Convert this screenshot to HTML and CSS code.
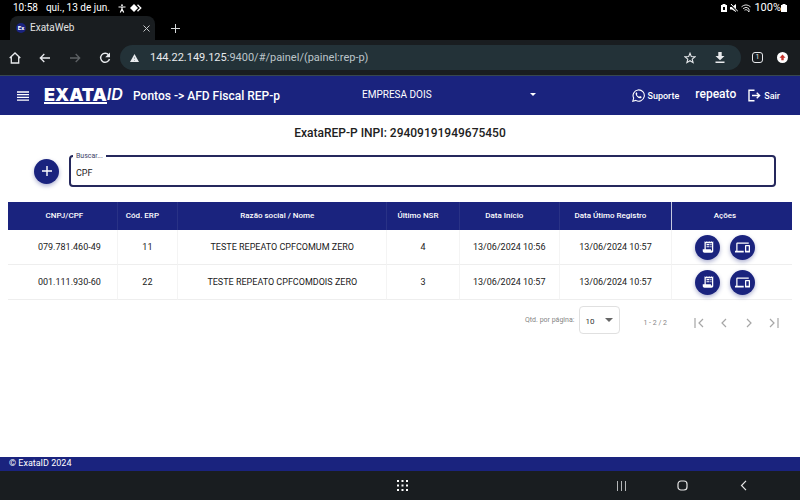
FILE: index.html
```html
<!DOCTYPE html>
<html lang="pt-BR">
<head>
<meta charset="utf-8">
<meta name="viewport" content="width=device-width, initial-scale=1">
<title>ExataWeb</title>
<link rel="stylesheet" href="styles.css">
</head>
<body>
<svg class="defs" aria-hidden="true">
  <symbol id="receipt" viewBox="0 0 24 24"><path fill="currentColor" fill-rule="evenodd" d="M21 2v17c0 1.700-1.300 3-3 3H6c-1.700 0-3-1.300-3-3v-3h3V2l1.500 1.500L9 2l1.500 1.500L12 2l1.500 1.500L15 2l1.500 1.500L18 2l1.500 1.500zM8.200 5.500V16H17v2h1.800V5.500z"/><path fill="currentColor" d="M9.500 7h5v2h-5zM16 7h2v2h-2zM9.500 10.500h5v2h-5zM16 10.500h2v2h-2z"/></symbol>
  <symbol id="devices" viewBox="0 0 24 24"><path fill="currentColor" d="M4 6h18V4H4c-1.100 0-2 .9-2 2v11H0v3h14v-3H4V6zm19 2h-6c-.55 0-1 .45-1 1v10c0 .55.45 1 1 1h6c.55 0 1-.45 1-1V9c0-.55-.45-1-1-1zm-1 9h-4v-7h4v7z"/></symbol>
</svg>

<div class="status">
  <div class="group">
    <span>10:58</span>
    <span>qui., 13 de jun.</span>
    <span class="status-icons">
      <svg width="8" height="9" viewBox="0 0 8 9" fill="none" stroke="#fff" stroke-width="1.200"><circle cx="4" cy="1.200" r=".9" fill="#fff" stroke="none"/><path d="M.5 3h7M4 3v2.500M4 5 2.300 8.600M4 5l1.700 3.600"/></svg>
      <svg width="12" height="8" viewBox="0 0 12 8"><path fill="#fff" d="m4 0 4 4-4 4-4-4z"/><path d="m7.500.7 3.300 3.300-3.300 3.300" fill="none" stroke="#fff" stroke-width="1.300"/></svg>
    </span>
  </div>
  <div class="group tight">
    <svg width="6" height="8" viewBox="0 0 6 8"><path fill="#fff" d="M1.500 0h3v1H6v7H0V1h1.500z"/><path d="M2 3h2v3H2z" fill="#000"/></svg>
    <svg width="8" height="8" viewBox="0 0 8 8"><path fill="#fff" d="M0 3h2l4-3v8L2 5.500H0z"/><path d="m0 0 8 8" stroke="#000" stroke-width="1.600"/><path d="m1 0 7 7.500" stroke="#fff"/></svg>
    <svg width="10" height="8" viewBox="0 0 10 8" fill="none" stroke="#ddd"><path d="M.5 2.800Q5-1 9.500 2.800M2 4.600Q5 2 8 4.600M3.500 6.200Q5 5 6.500 6.200"/><path d="M8 5v3M6.500 6.500 8 8"/></svg>
    <span class="battery">100%<svg width="6" height="8" viewBox="0 0 6 8"><path fill="#fff" d="M1.500 0h3v1H6v7H0V1h1.500z"/></svg></span>
  </div>
</div>

<div class="tabs">
  <div class="tab">
    <span class="favicon">Ex</span>
    <span class="tab-title">ExataWeb</span>
    <button class="plain" aria-label="Fechar guia"><svg width="7" height="7" viewBox="0 0 7 7" stroke="#c4c7c9"><path d="m.5.5 6 6m0-6-6 6"/></svg></button>
  </div>
  <button class="plain" aria-label="Nova guia"><svg width="9" height="9" viewBox="0 0 9 9" stroke="#d5d8da"><path d="M4.500 0v9M0 4.500h9"/></svg></button>
</div>

<div class="toolbar">
  <button class="plain nav" aria-label="Início"><svg width="12" height="12" viewBox="0 0 12 12" fill="none" stroke="#e8eaed" stroke-width="1.300"><path d="M.7 6 6 1l5.300 5M2.300 5v6h7.400V5"/></svg></button>
  <button class="plain nav" aria-label="Voltar"><svg width="12" height="10" viewBox="0 0 12 10" fill="none" stroke="#e8eaed" stroke-width="1.300"><path d="M11 5H1.500M5.300 1 1.300 5l4 4"/></svg></button>
  <button class="plain nav" aria-label="Avançar"><svg width="12" height="10" viewBox="0 0 12 10" fill="none" stroke="#5d6164" stroke-width="1.300"><path d="M1 5h9.500M6.700 1l4 4-4 4"/></svg></button>
  <button class="plain nav" aria-label="Recarregar"><svg width="12" height="12" viewBox="0 0 12 12" fill="none" stroke="#e8eaed" stroke-width="1.400"><path d="M9.700 3A4.500 4.500 0 1 0 10.500 7"/><path fill="#e8eaed" stroke="none" d="M11 .5v4.800H6.200z"/></svg></button>
  <div class="address">
    <svg width="9" height="8" viewBox="0 0 9 8"><path fill="#e8eaed" d="M4.500 0 9 8H0z"/><path d="M4.500 3v2M4.500 6v1" stroke="#94a0a4" stroke-width=".8"/></svg>
    <span class="url"><b>144.22.149.125</b>:9400/#/painel/(painel:rep-p)</span>
    <button class="plain nav" aria-label="Favoritar"><svg width="12" height="12" viewBox="0 0 24 24" fill="none" stroke="#e8eaed" stroke-width="2.200"><path d="m12 2.500 2.700 6.700 7.200.5-5.500 4.600 1.800 7L12 17.400l-6.200 3.900 1.800-7-5.500-4.600 7.200-.5z"/></svg></button>
    <button class="plain nav" aria-label="Baixar"><svg width="10" height="11" viewBox="0 0 10 11" fill="#e8eaed"><path d="M3.300 0h3.400v4H9.500L5 8.300.5 4h2.800zM.5 9.500h9V11h-9z"/></svg></button>
  </div>
  <button class="plain count" aria-label="Guias abertas">1</button>
  <button class="plain update" aria-label="Atualizar"><svg width="11" height="11" viewBox="0 0 11 11"><circle cx="5.500" cy="5.500" r="5.500" fill="#fff"/><path fill="#c5322b" d="m5.500 2.500 3 3.200H6.700v2.500H4.300V5.700H2.500z"/></svg></button>
</div>

<header class="appbar">
  <button class="plain" aria-label="Menu"><svg width="12" height="10" viewBox="0 0 12 10" stroke="#fff" stroke-width="1.300"><path d="M0 1h12M0 3.700h12M0 6.400h12M0 9.100h12"/></svg></button>
  <a class="logo" href="#"><span class="logo-main">EXATA</span><span class="logo-id">ID</span></a>
  <h1>Pontos -&gt; AFD Fiscal REP-p</h1>
  <div class="select company">
    <select aria-label="Empresa"><option>EMPRESA DOIS</option></select>
  </div>
  <nav>
    <a href="#"><svg width="13" height="13" viewBox="0 0 24 24"><path fill="none" stroke="#fff" stroke-width="2" d="m1.500 22.500 1.600-5.700A10.400 10.400 0 1 1 7 21z"/><path fill="#fff" d="M8.500 6.200c-1 .2-2 1.400-1.800 2.900.4 3.500 4.600 7.700 8 8.100 1.500.1 2.900-.8 3-2.200l-.2-.8-2.700-1.300-1.300 1.500c-2-.7-3.600-2.200-4.500-4l1-1.300-1-2.700z"/></svg>Suporte</a>
    <span class="user">repeato</span>
    <a href="#"><svg width="13" height="13" viewBox="0 0 13 13" fill="none" stroke="#fff" stroke-width="1.400"><path d="M6.500 1.200H1v10.600h5.500M4 6.500h7M8.700 3.800l2.900 2.700-2.900 2.700"/></svg>Sair</a>
  </nav>
</header>

<main>
  <h2>ExataREP-P INPI: 29409191949675450</h2>
  <form class="search">
    <button type="button" class="fab" aria-label="Adicionar"><svg width="10" height="10" viewBox="0 0 10 10" stroke="#fff" stroke-width="1.400"><path d="M5 0v10M0 5h10"/></svg></button>
    <div class="field">
      <label for="q">Buscar...</label>
      <input id="q" type="text" value="CPF">
    </div>
  </form>

  <table>
    <colgroup><col class="c-doc"><col class="c-erp"><col class="c-name"><col class="c-nsr"><col class="c-start"><col class="c-last"><col></colgroup>
    <thead>
      <tr><th>CNPJ/CPF</th><th>Cód. ERP</th><th>Razão social / Nome</th><th>Último NSR</th><th>Data Início</th><th>Data Útimo Registro</th><th>Ações</th></tr>
    </thead>
    <tbody>
      <tr>
        <td>079.781.460-49</td><td>11</td><td>TESTE REPEATO CPFCOMUM ZERO</td><td>4</td><td>13/06/2024 10:56</td><td>13/06/2024 10:57</td>
        <td><div class="actions"><button class="fab" aria-label="Relatório"><svg width="14" height="14"><use href="#receipt"/></svg></button><button class="fab" aria-label="Dispositivos"><svg width="15" height="15"><use href="#devices"/></svg></button></div></td>
      </tr>
      <tr>
        <td>001.111.930-60</td><td>22</td><td>TESTE REPEATO CPFCOMDOIS ZERO</td><td>3</td><td>13/06/2024 10:57</td><td>13/06/2024 10:57</td>
        <td><div class="actions"><button class="fab" aria-label="Relatório"><svg width="14" height="14"><use href="#receipt"/></svg></button><button class="fab" aria-label="Dispositivos"><svg width="15" height="15"><use href="#devices"/></svg></button></div></td>
      </tr>
    </tbody>
  </table>

  <div class="paginator">
    <label for="size">Qtd. por página:</label>
    <div class="select page-size">
      <select id="size"><option>10</option></select>
    </div>
    <span class="range">1 - 2 / 2</span>
    <div class="pages">
      <button class="plain" aria-label="Primeira página"><svg width="10" height="10" viewBox="0 0 10 10"><path d="M1 0v10M9 1 5 5l4 4"/></svg></button>
      <button class="plain" aria-label="Página anterior"><svg width="10" height="10" viewBox="0 0 10 10"><path d="M7 1 3 5l4 4"/></svg></button>
      <button class="plain" aria-label="Próxima página"><svg width="10" height="10" viewBox="0 0 10 10"><path d="m3 1 4 4-4 4"/></svg></button>
      <button class="plain" aria-label="Última página"><svg width="10" height="10" viewBox="0 0 10 10"><path d="m1 1 4 4-4 4M9 0v10"/></svg></button>
    </div>
  </div>
</main>

<footer>© ExataID 2024</footer>

<div class="system">
  <span></span>
  <button class="plain" aria-label="Aplicativos"><svg width="11" height="11" viewBox="0 0 11 11" fill="#fff"><path d="M0 0h2v2H0zM4.500 0h2v2h-2zM9 0h2v2H9zM0 4.500h2v2H0zM4.500 4.500h2v2h-2zM9 4.500h2v2H9zM0 9h2v2H0zM4.500 9h2v2h-2zM9 9h2v2H9z"/></svg></button>
  <div class="keys">
    <button class="plain" aria-label="Recentes"><svg width="10" height="10" viewBox="0 0 10 10" stroke="#b4b6b8"><path d="M1.500 0v10M5.500 0v10M9.500 0v10"/></svg></button>
    <button class="plain" aria-label="Tela inicial"><svg width="11" height="11" viewBox="0 0 11 11" fill="none" stroke="#e6e6e6" stroke-width="1.200"><rect x="1" y="1" width="9" height="9" rx="3"/></svg></button>
    <button class="plain" aria-label="Voltar"><svg width="10" height="11" viewBox="0 0 10 11" fill="none" stroke="#e6e6e6" stroke-width="1.200"><path d="M7 .8 2.500 5.500 7 10.200"/></svg></button>
  </div>
</div>
</body>
</html>
```
FILE: styles.css
```css
* {
  box-sizing: border-box;
}

body {
  margin: 0;
  min-height: 100vh;
  display: flex;
  flex-direction: column;
  background: #fff;
  color: #212121;
  font: 9px/12px Roboto, "Liberation Sans", sans-serif;
}

button,
input,
select {
  font: inherit;
  color: inherit;
}

svg {
  display: block;
  flex: none;
}

a {
  color: inherit;
  text-decoration: none;
}

.defs {
  position: absolute;
  width: 0;
  height: 0;
}

.plain {
  display: grid;
  place-items: center;
  padding: 0;
  border: 0;
  background: none;
}

/* Drop-down with a triangle on its right side */
.select {
  position: relative;
}

.select select {
  display: block;
  width: 100%;
  height: 100%;
  padding: 0;
  border: 0;
  appearance: none;
  background: transparent;
}

.select::after {
  content: "";
  position: absolute;
  top: 50%;
  right: 6px;
  margin-top: -2px;
  border: 4px solid transparent;
  border-top-color: currentColor;
  border-bottom: 0;
  pointer-events: none;
}

/* Tablet status bar */
.status {
  display: flex;
  justify-content: space-between;
  align-items: center;
  height: 16px;
  padding: 0 13px;
  background: #000;
  color: #fff;
  font-size: 10px;
}

.group {
  display: flex;
  align-items: center;
  gap: 8px;
}

.tight {
  gap: 3px;
}

.battery {
  display: flex;
  align-items: center;
  font-size: 11px;
}

.status-icons {
  display: flex;
  align-items: center;
  gap: 4px;
}

/* Browser chrome */
.tabs {
  display: flex;
  align-items: center;
  gap: 16px;
  height: 24px;
  padding-left: 10px;
  background: #000;
}

.tab {
  display: flex;
  align-items: center;
  gap: 4px;
  width: 145px;
  height: 24px;
  padding: 0 5px 0 6px;
  border-radius: 8px 8px 0 0;
  background: #191d20;
  color: #e3e3e3;
}

.favicon {
  width: 10px;
  height: 10px;
  border-radius: 5px;
  background: #1a237e;
  color: #fff;
  font-size: 6px;
  font-weight: 700;
  line-height: 10px;
  text-align: center;
}

.tab-title {
  flex: 1;
  font-size: 10px;
}

.toolbar {
  display: flex;
  align-items: center;
  height: 36px;
  padding-right: 12px;
  border-bottom: 1px solid #37474f;
  background: #191d20;
}

.nav {
  width: 30px;
  height: 24px;
}

.address {
  flex: 1;
  display: flex;
  align-items: center;
  height: 25px;
  margin-right: 11px;
  padding: 0 6px 0 10px;
  border-radius: 13px;
  background: #233238;
}

.url {
  flex: 1;
  padding-left: 11px;
  color: #bcc5c9;
  font-size: 11px;
}

.url b {
  color: #e8eaed;
  font-weight: 400;
}

.count {
  width: 11px;
  height: 11px;
  margin-right: 14px;
  border: 1px solid #e8eaed;
  border-radius: 3px;
  color: #e8eaed;
  font-size: 7px;
  line-height: 9px;
}

/* Application header */
.appbar {
  display: flex;
  align-items: center;
  height: 39px;
  padding: 0 20px 0 17px;
  background: #1a237e;
  color: #fff;
}

.logo {
  display: flex;
  width: 80px;
  margin: 0 9px 0 15px;
  font: 900 18px/13px Inter, sans-serif;
}

.logo-main {
  height: 16px;
  border-bottom: 2px solid #fff;
}

.logo-id {
  font-size: 16px;
  font-style: italic;
  font-weight: 600;
}

h1 {
  margin: 0;
  font-size: 12px;
  font-weight: 500;
  line-height: 16px;
  white-space: nowrap;
}

.company {
  width: 180px;
  height: 20px;
  margin: 0 0 2px 82px;
  font-size: 10px;
}

.company::after {
  border-width: 3px;
  border-bottom: 0;
}

nav {
  display: flex;
  align-items: center;
  gap: 12px;
  margin-left: auto;
}

nav a {
  display: flex;
  align-items: center;
  gap: 3px;
  font-weight: 500;
}

.user {
  margin: 0 0 4px 4px;
  font-size: 12px;
  font-weight: 500;
}

/* Content */
main {
  flex: 1;
  padding: 10px 8px;
}

h2 {
  margin: 0 0 14px;
  font-size: 12px;
  font-weight: 500;
  line-height: 16px;
  text-align: center;
}

.search {
  display: flex;
  align-items: center;
  gap: 10px;
  margin: 0 16px 15px 26px;
}

.fab {
  display: grid;
  place-items: center;
  width: 25px;
  height: 25px;
  padding: 0;
  border: 0;
  border-radius: 50%;
  background: #1a237e;
  box-shadow: 0 2px 4px rgba(26, 35, 126, 0.35);
  color: #fff;
}

.field {
  position: relative;
  flex: 1;
}

.field label {
  position: absolute;
  top: -4px;
  left: 4px;
  padding: 0 3px;
  background: #fff;
  color: #3d4266;
  font-size: 7px;
  line-height: 10px;
}

.field input {
  display: block;
  width: 100%;
  height: 32px;
  padding: 4px 5px 0;
  border: 2px solid #25285c;
  border-radius: 4px;
  outline: 0;
  background: #fff;
}

table {
  width: 100%;
  table-layout: fixed;
  border-collapse: separate;
  border-spacing: 0;
  text-align: center;
}

.c-doc { width: 14%; }
.c-erp { width: 7.7%; }
.c-name { width: 26.7%; }
.c-nsr { width: 9.2%; }
.c-start { width: 12.8%; }
.c-last { width: 14.3%; }

th {
  height: 28px;
  padding: 0 10px 0 0;
  border-right: 1px solid #293286;
  background: #1a237e;
  color: #fff;
  font-size: 8px;
  font-weight: 500;
  white-space: nowrap;
}

td {
  height: 35px;
  padding: 0;
  border-right: 1px solid #f4f4f4;
  border-bottom: 1px solid #eee;
  white-space: nowrap;
}

th:first-child,
td:first-child {
  padding-left: 14px;
}

th:nth-child(6) {
  border-right-color: #c5c8e0;
}

th:last-child,
td:last-child {
  padding-right: 14px;
  border-right: 0;
}

.actions {
  display: flex;
  justify-content: center;
  gap: 10px;
}

.paginator {
  display: flex;
  justify-content: flex-end;
  align-items: center;
  padding: 6px 13px 0 0;
  color: #858585;
  font-size: 8px;
}

.paginator label {
  font-size: 7px;
}

.page-size {
  width: 41px;
  height: 28px;
  margin: 0 23px 0 5px;
  border: 1px solid #e0e0e0;
  border-radius: 4px;
  color: #666;
}

.page-size select {
  padding: 3px 0 0 5px;
  color: #333;
}

.range {
  padding-top: 6px;
  font-size: 7px;
}

.pages {
  display: flex;
  gap: 15px;
  margin-left: 27px;
  padding-top: 6px;
}

.pages svg {
  fill: none;
  stroke: #a6a6a6;
  stroke-width: 1.2;
}

footer {
  height: 14px;
  padding: 0 9px;
  background: #1a237e;
  color: #fff;
}

/* Tablet navigation bar */
.system {
  display: grid;
  grid-template-columns: 1fr auto 1fr;
  align-items: center;
  height: 29px;
  padding-left: 4px;
  background: #191d20;
}

.keys {
  display: flex;
  justify-content: flex-end;
  gap: 51px;
  padding-right: 51px;
}
```
